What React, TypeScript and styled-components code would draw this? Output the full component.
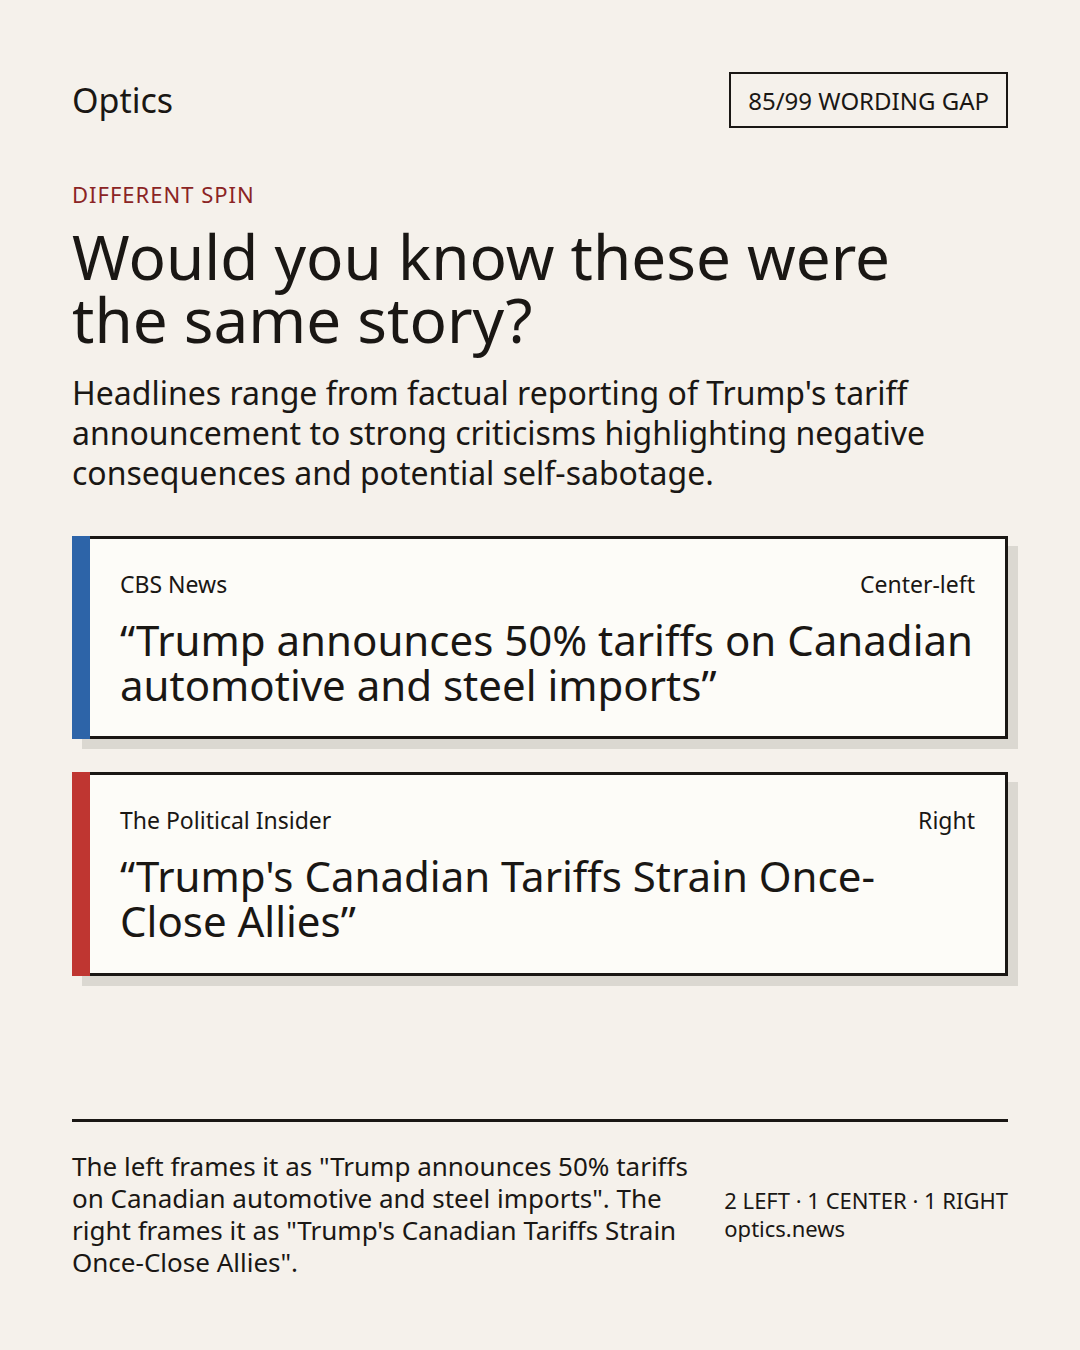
import React from 'react'
import styled, { createGlobalStyle } from 'styled-components'

const GlobalStyle = createGlobalStyle`
  * {
    box-sizing: border-box;
  }
  body {
    margin: 0;
    background: #f5f1eb;
    color: #1a1714;
    font-family: "Noto Sans", "Open Sans", sans-serif;
  }
`

const Page = styled('main')`
  display: flex;
  flex-direction: column;
  min-height: 1350px;
  padding: 72px;
  width: 1080px;
`

const Header = styled('header')`
  align-items: center;
  display: flex;
  justify-content: space-between;
`

const Brand = styled('div')`
  font-size: 34px;
`

const Badge = styled('div')`
  align-items: center;
  border: 2px solid #1a1714;
  display: flex;
  font-size: 24px;
  height: 56px;
  padding: 0 17px;
`

const Kicker = styled('div')`
  color: #8b2424;
  font-size: 22px;
  letter-spacing: 1px;
  margin-top: 51px;
`

const Title = styled('h1')`
  font-size: 62px;
  font-weight: 400;
  line-height: 63px;
  margin: 16px 0 0;
  max-width: 880px;
`

const Lede = styled('p')`
  font-size: 32px;
  line-height: 40px;
  margin: 22px 0 0;
`

const CardList = styled('section')`
  display: flex;
  flex-direction: column;
  gap: 33px;
  margin-top: 43px;
`

interface ICard {
  accent: string
}

const Card = styled('article')`
  box-shadow: 10px 10px 0 #dbd8d1;
  display: flex;
`

const Stripe = styled('div')<ICard>`
  background: ${(props) => props.accent};
  flex: 0 0 18px;
`

const CardBody = styled('div')`
  background: #fdfcf8;
  border: 3px solid #1a1714;
  border-left: none;
  flex: 1;
  padding: 29px 30px 29px;
`

const CardMeta = styled('div')`
  display: flex;
  font-size: 23px;
  justify-content: space-between;
`

const Quote = styled('h2')`
  font-size: 42px;
  font-weight: 400;
  line-height: 44.7px;
  margin: 18px 0 0;
`

const Footer = styled('footer')`
  align-items: center;
  border-top: 3px solid #1a1714;
  display: flex;
  justify-content: space-between;
  margin-top: auto;
  padding-top: 28px;
`

const Summary = styled('p')`
  font-size: 26px;
  line-height: 32px;
  margin: 0;
  max-width: 628px;
`

const Tally = styled('div')`
  font-size: 22px;
  line-height: 28px;
  white-space: nowrap;
`

const stories = [
  {
    source: 'CBS News',
    lean: 'Center-left',
    accent: '#2d64a8',
    headline: 'Trump announces 50% tariffs on Canadian automotive and steel imports',
  },
  {
    source: 'The Political Insider',
    lean: 'Right',
    accent: '#bf3631',
    headline: "Trump's Canadian Tariffs Strain Once-Close Allies",
  },
]

export default function App() {
  return (
    <>
      <GlobalStyle />
      <Page>
        <Header>
          <Brand>Optics</Brand>
          <Badge>85/99 WORDING GAP</Badge>
        </Header>
        <Kicker>DIFFERENT SPIN</Kicker>
        <Title>Would you know these were the same story?</Title>
        <Lede>
          Headlines range from factual reporting of Trump's tariff announcement to strong
          criticisms highlighting negative consequences and potential self-sabotage.
        </Lede>
        <CardList>
          {stories.map((story) => (
            <Card key={story.source}>
              <Stripe accent={story.accent} />
              <CardBody>
                <CardMeta>
                  <span>{story.source}</span>
                  <span>{story.lean}</span>
                </CardMeta>
                <Quote>“{story.headline}”</Quote>
              </CardBody>
            </Card>
          ))}
        </CardList>
        <Footer>
          <Summary>
            The left frames it as "Trump announces 50% tariffs on Canadian automotive and steel
            imports". The right frames it as "Trump's Canadian Tariffs Strain Once-Close Allies".
          </Summary>
          <Tally>
            2 LEFT · 1 CENTER · 1 RIGHT
            <br />
            optics.news
          </Tally>
        </Footer>
      </Page>
    </>
  )
}
